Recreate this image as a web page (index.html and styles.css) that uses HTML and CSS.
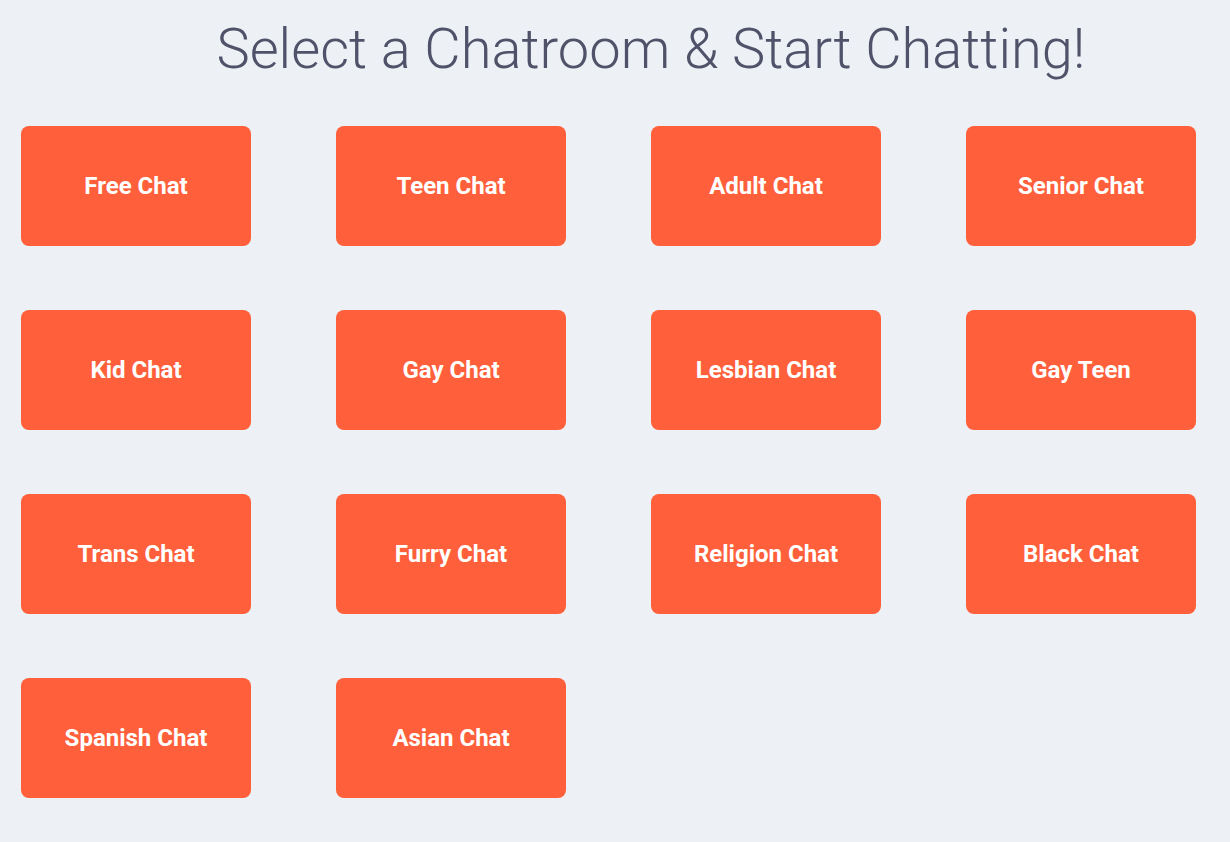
FILE: index.html
```html
<!DOCTYPE html>
<html>
<head>
<meta charset="utf-8">
<link rel="stylesheet" href="styles.css">
</head>
<body>
<h1 class="title">Select a Chatroom &amp; Start Chatting!</h1>
<div class="grid">
  <a class="room">Free Chat</a>
  <a class="room">Teen Chat</a>
  <a class="room">Adult Chat</a>
  <a class="room">Senior Chat</a>
  <a class="room">Kid Chat</a>
  <a class="room">Gay Chat</a>
  <a class="room">Lesbian Chat</a>
  <a class="room">Gay Teen</a>
  <a class="room">Trans Chat</a>
  <a class="room">Furry Chat</a>
  <a class="room">Religion Chat</a>
  <a class="room">Black Chat</a>
  <a class="room">Spanish Chat</a>
  <a class="room">Asian Chat</a>
</div>
</body>
</html>
```
FILE: styles.css
```css
html, body {
  margin: 0;
  padding: 0;
  background: #edf1f6;
  font-family: Roboto, "Liberation Sans", sans-serif;
}
.title {
  margin: 0;
  padding: 14px 0 0 72px;
  height: 112px;
  box-sizing: border-box;
  text-align: center;
  font-size: 56px;
  font-weight: 300;
  line-height: 70px;
  color: #4f5269;
}
.grid {
  display: grid;
  grid-template-columns: repeat(4, 230px);
  grid-auto-rows: 120px;
  column-gap: 85px;
  row-gap: 64px;
  padding: 14px 0 0 21px;
}
.room {
  display: flex;
  align-items: center;
  justify-content: center;
  background: #ff5f3b;
  border-radius: 8px;
  color: #fff;
  font-weight: 700;
  font-size: 24px;
}
```
